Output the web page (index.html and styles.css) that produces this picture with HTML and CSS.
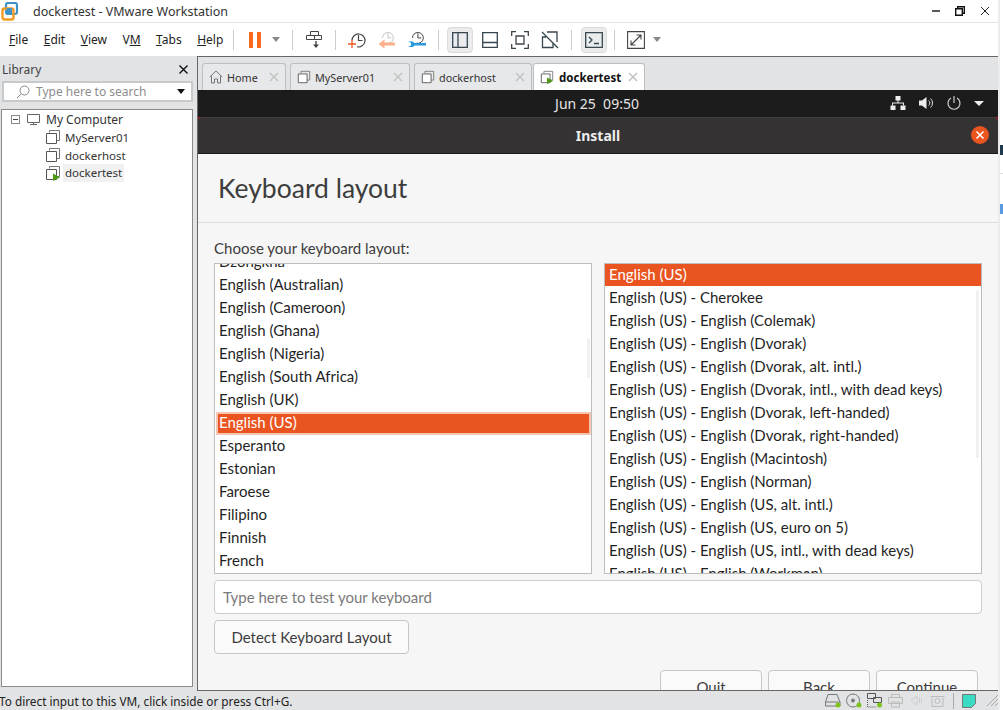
FILE: index.html
```html
<!DOCTYPE html>
<html lang="en">

<head>
    <meta charset="utf-8">
    <title>dockertest - VMware Workstation</title>
    <link rel="stylesheet" href="styles.css">
</head>

<body>
    <svg class="defs" width="0" height="0">
        <symbol id="vm" viewBox="0 0 16 16">
            <path d="M4.5 3.5V1.5h10v10h-3" fill="none" stroke="#777"/>
            <path d="M1.5 4.5h10v10h-10z" fill="#fff" stroke="#555"/>
        </symbol>
        <symbol id="clock" viewBox="0 0 18 18">
            <path d="M3 9.5a6.5 6.5 0 1 1 5 6.3" fill="none" stroke="currentColor" stroke-width="1.2"/>
            <path d="M9.5 4v5.5h4" fill="none" stroke="currentColor" stroke-width="1.2"/>
        </symbol>
        <symbol id="tab-x" viewBox="0 0 10 10">
            <path d="M1 1l8 8M9 1l-8 8" stroke="#c4c4c4" stroke-width="1.6"/>
        </symbol>
    </svg>

    <div class="window">
        <header class="titlebar">
            <svg class="logo" width="17" height="19" viewBox="0 0 17 19">
                <rect x="5" y="1" width="11" height="11" rx="2" fill="none" stroke="#3d93c8" stroke-width="2.2"/>
                <rect x="1.5" y="6.5" width="11" height="11" rx="2" fill="none" stroke="#f29a25" stroke-width="2.4"/>
                <rect x="6" y="6" width="5" height="5" fill="#3d93c8"/>
            </svg>
            <span class="app-title">dockertest - VMware Workstation</span>
            <div class="win-buttons">
                <svg width="10" height="10" viewBox="0 0 10 10"><path d="M2 5h8" stroke="#111" stroke-width="1.4"/></svg>
                <svg width="10" height="10" viewBox="0 0 10 10"><path d="M.7 2.7h6.6v6.6H.7zM2.7 2V.7h6.6v6.6H8" fill="none" stroke="#111" stroke-width="1.4"/></svg>
                <svg width="10" height="10" viewBox="0 0 10 10"><path d="M1 1l8 8M9 1L1 9" stroke="#222" stroke-width="1"/></svg>
            </div>
        </header>

        <nav class="menubar">
            <div class="menu">
                <span><u>F</u>ile</span>
                <span><u>E</u>dit</span>
                <span><u>V</u>iew</span>
                <span>V<u>M</u></span>
                <span><u>T</u>abs</span>
                <span><u>H</u>elp</span>
            </div>
            <i class="sep first"></i>
            <div class="pause"><b></b><b></b></div>
            <i class="caret"></i>
            <i class="sep"></i>
            <div class="tool">
                <svg width="20" height="20" viewBox="0 0 20 20" fill="none" stroke="#444">
                    <path d="M6.5 1.5h8v4h-8zM2.5 5.5h8v4h-8zM10.5 5.5h7v4h-7z"/>
                    <path d="M12 11v4" stroke-width="1.4"/>
                    <path d="M9 14.5h6L12 18z" fill="#444" stroke="none"/>
                </svg>
            </div>
            <i class="sep"></i>
            <div class="tool">
                <svg class="c-dark" width="20" height="20" viewBox="0 0 20 20">
                    <use href="#clock" x="2" y="1" width="18" height="18"/>
                    <path d="M1 14h8M5 10v8" stroke="#ee5a1f" stroke-width="1.3"/>
                </svg>
            </div>
            <div class="tool">
                <svg class="c-faint" width="20" height="20" viewBox="0 0 20 20">
                    <use href="#clock" x="3" y="0" width="15" height="15"/>
                    <path d="M7 12.5h11v3H7z" fill="#ffb08a"/>
                    <path d="M7.5 9.5v9L1.5 14z" fill="#ffb08a"/>
                </svg>
            </div>
            <div class="tool">
                <svg class="c-dark" width="20" height="20" viewBox="0 0 20 20">
                    <use href="#clock" x="3" y="0" width="15" height="15"/>
                    <path d="M1 11.5h5l1.5 1.5H19v2.5H7.5L6 17H1l3-1.5v-2.5z" fill="#2a9ae0"/>
                </svg>
            </div>
            <i class="sep"></i>
            <div class="tool active">
                <svg width="16" height="16" viewBox="0 0 16 16" fill="none" stroke="#37474f" stroke-width="1.3"><path d="M.7.7h14.6v14.6H.7zM6 .7v14.6"/></svg>
            </div>
            <div class="tool">
                <svg width="16" height="16" viewBox="0 0 16 16" fill="none" stroke="#37474f" stroke-width="1.3"><path d="M.7.7h14.6v14.6H.7zM.7 10.5h14.6"/></svg>
            </div>
            <div class="tool">
                <svg width="18" height="18" viewBox="0 0 18 18" fill="none" stroke="#37474f" stroke-width="1.3"><path d="M5 .7H.7V5M13 .7h4.300V5M5 17.300H.7V13M13 17.300h4.300V13M5 5h8v8H5z"/></svg>
            </div>
            <div class="tool">
                <svg width="18" height="18" viewBox="0 0 18 18" fill="none" stroke="#37474f" stroke-width="1.3"><path d="M6 1h10v10M12 12v4.500H1.500V6H5M1 1l16 16"/></svg>
            </div>
            <i class="sep"></i>
            <div class="tool active console">
                <svg width="18" height="16" viewBox="0 0 18 16" fill="none" stroke="#37474f" stroke-width="1.3"><path d="M.7.7h16.600v14.600H.7zM4 5l3 3-3 3M9 11.500h5"/></svg>
            </div>
            <i class="sep"></i>
            <div class="tool">
                <svg width="18" height="18" viewBox="0 0 18 18" fill="none" stroke="#444" stroke-width="1.1"><path d="M.6.6h16.800v16.800H.6zM4 14l10-10M9.500 4H14v4.500M4 9.500V14h4.500"/></svg>
            </div>
            <i class="caret last"></i>
        </nav>

        <div class="main">
            <aside class="library">
                <div class="lib-head">
                    <span>Library</span>
                    <svg width="9" height="9" viewBox="0 0 9 9"><path d="M.5.5l8 8M8.500.5l-8 8" stroke="#111" stroke-width="1.4"/></svg>
                </div>
                <div class="lib-search">
                    <svg width="14" height="14" viewBox="0 0 14 14" fill="none" stroke="#888"><circle cx="8.500" cy="5.500" r="4.500"/><path d="M5 9l-4 4"/></svg>
                    <span>Type here to search</span>
                    <i class="caret black"></i>
                </div>
                <div class="tree">
                    <div class="tree-row root">
                        <i class="collapse"></i>
                        <svg width="15" height="13" viewBox="0 0 15 13" fill="none" stroke="#666"><path d="M1.500 1.500h12v8h-12zM4 11.500h7M7.500 9.500v2"/></svg>
                        <span>My Computer</span>
                    </div>
                    <div class="tree-row">
                        <svg width="16" height="16"><use href="#vm"/></svg>
                        <span>MyServer01</span>
                    </div>
                    <div class="tree-row">
                        <svg width="16" height="16"><use href="#vm"/></svg>
                        <span>dockerhost</span>
                    </div>
                    <div class="tree-row">
                        <svg width="16" height="16" viewBox="0 0 16 16">
                            <use href="#vm"/>
                            <path d="M8 8.500l7 4-7 3.500z" fill="#4c9a16"/>
                        </svg>
                        <span class="current">dockertest</span>
                    </div>
                </div>
            </aside>

            <section class="workspace">
                <div class="tabs">
                    <div class="tab home">
                        <svg width="14" height="14" viewBox="0 0 14 14" fill="none" stroke="#777"><path d="M.7 7L7 1l6.300 6M2.500 6v7h3V9h3v4h3V6"/></svg>
                        <span>Home</span>
                        <svg class="tab-close" width="10" height="10"><use href="#tab-x"/></svg>
                    </div>
                    <div class="tab server">
                        <svg width="14" height="14" viewBox="0 0 16 16"><use href="#vm"/></svg>
                        <span>MyServer01</span>
                        <svg class="tab-close" width="10" height="10"><use href="#tab-x"/></svg>
                    </div>
                    <div class="tab host">
                        <svg width="14" height="14" viewBox="0 0 16 16"><use href="#vm"/></svg>
                        <span>dockerhost</span>
                        <svg class="tab-close" width="10" height="10"><use href="#tab-x"/></svg>
                    </div>
                    <div class="tab on">
                        <svg width="14" height="14" viewBox="0 0 16 16">
                            <use href="#vm"/>
                            <path d="M8 8.500l7 4-7 3.500z" fill="#4c9a16"/>
                        </svg>
                        <span>dockertest</span>
                        <svg class="tab-close" width="10" height="10"><use href="#tab-x"/></svg>
                    </div>
                </div>

                <div class="guest">
                    <div class="gnome-bar">
                        <span class="clock">Jun 25&nbsp;&nbsp;09:50</span>
                        <div class="tray">
                            <svg width="16" height="14" viewBox="0 0 16 14" fill="#eee">
                                <rect x="5.500" y="0" width="5" height="4.500"/>
                                <rect x="0.500" y="9.500" width="5" height="4.500"/>
                                <rect x="10.500" y="9.500" width="5" height="4.500"/>
                                <path d="M7.500 4h1v2.500h5.500v3h-1V7.500H3v2H2v-3h5.500z"/>
                            </svg>
                            <svg width="15" height="14" viewBox="0 0 15 14">
                                <path d="M0 4.500h3L7.500 1v12L3 9.500H0z" fill="#eee"/>
                                <path d="M9.500 4.500a3 3 0 0 1 0 5M11.500 2.500a6 6 0 0 1 0 9" fill="none" stroke="#ddd"/>
                            </svg>
                            <svg width="14" height="14" viewBox="0 0 14 14" fill="none" stroke="#ddd" stroke-width="1.100"><path d="M4 2a6 6 0 1 0 6 0M7 0v7"/></svg>
                            <i class="caret white"></i>
                        </div>
                    </div>
                    <div class="install-bar">
                        <span>Install</span>
                        <svg class="install-close" width="18" height="18" viewBox="0 0 18 18">
                            <circle cx="9" cy="9" r="9" fill="#e95420"/>
                            <path d="M5.500 5.500l7 7M12.500 5.500l-7 7" stroke="#fff" stroke-width="1.500"/>
                        </svg>
                    </div>
                    <div class="installer">
                        <h1>Keyboard layout</h1>
                        <div class="pane">
                            <label>Choose your keyboard layout:</label>
                            <div class="lists">
                                <div class="list left">
                                    <ul>
                                        <li>Dzongkha</li>
                                        <li>English (Australian)</li>
                                        <li>English (Cameroon)</li>
                                        <li>English (Ghana)</li>
                                        <li>English (Nigeria)</li>
                                        <li>English (South Africa)</li>
                                        <li>English (UK)</li>
                                        <li class="sel">English (US)</li>
                                        <li>Esperanto</li>
                                        <li>Estonian</li>
                                        <li>Faroese</li>
                                        <li>Filipino</li>
                                        <li>Finnish</li>
                                        <li>French</li>
                                    </ul>
                                    <i class="scroll"></i>
                                </div>
                                <div class="list right">
                                    <ul>
                                        <li class="sel">English (US)</li>
                                        <li>English (US) - Cherokee</li>
                                        <li>English (US) - English (Colemak)</li>
                                        <li>English (US) - English (Dvorak)</li>
                                        <li>English (US) - English (Dvorak, alt. intl.)</li>
                                        <li>English (US) - English (Dvorak, intl., with dead keys)</li>
                                        <li>English (US) - English (Dvorak, left-handed)</li>
                                        <li>English (US) - English (Dvorak, right-handed)</li>
                                        <li>English (US) - English (Macintosh)</li>
                                        <li>English (US) - English (Norman)</li>
                                        <li>English (US) - English (US, alt. intl.)</li>
                                        <li>English (US) - English (US, euro on 5)</li>
                                        <li>English (US) - English (US, intl., with dead keys)</li>
                                        <li>English (US) - English (Workman)</li>
                                    </ul>
                                    <i class="scroll"></i>
                                </div>
                            </div>
                            <div class="test-input">Type here to test your keyboard</div>
                            <button class="btn detect">Detect Keyboard Layout</button>
                            <div class="actions">
                                <button class="btn">Quit</button>
                                <button class="btn">Back</button>
                                <button class="btn">Continue</button>
                            </div>
                        </div>
                    </div>
                </div>
            </section>
        </div>

        <footer class="statusbar">
            <span class="hint">To direct input to this VM, click inside or press Ctrl+G.</span>
            <div class="devices">
                <svg width="16" height="15" viewBox="0 0 16 15" fill="none" stroke="#777"><path d="M3 1.500h9l3 7.500v4H.5V9zM.5 9h14"/><circle cx="13" cy="12" r="2.500" fill="#7cc41a" stroke="none"/></svg>
                <svg width="16" height="15" viewBox="0 0 16 15" fill="none" stroke="#777"><circle cx="7" cy="7.500" r="6.500"/><circle cx="7" cy="7.500" r="1.500" fill="#777"/><circle cx="13" cy="12" r="2.500" fill="#7cc41a" stroke="none"/></svg>
                <svg width="16" height="15" viewBox="0 0 16 15" fill="none" stroke="#555"><path d="M.5.500h8v5h-8zM6.500 4.500h8v5h-8z"/><path d="M.5 7v7h8" stroke-dasharray="1 1"/><circle cx="12.500" cy="12" r="2.500" fill="#7cc41a" stroke="none"/></svg>
                <svg width="16" height="15" viewBox="0 0 16 15" fill="none" stroke="#bbb"><path d="M3.500 4.500v-3h8v3M.5 4.500h14v6h-14zM3.500 9h8v5h-8z"/></svg>
                <svg width="16" height="15" viewBox="0 0 16 15" fill="none" stroke="#ccc"><path d="M2 7.500L8 3v9zM10.500 5v5M12.500 5v5"/></svg>
                <svg width="16" height="15" viewBox="0 0 16 15" fill="none" stroke="#bbb"><path d="M.5 3.500h14M2 13.500h11M2 13.500V5M13 13.500V5"/><circle cx="7.500" cy="8" r="2.500"/></svg>
                <i class="status-sep"></i>
                <svg class="note" width="14" height="14" viewBox="0 0 14 14"><path d="M.5.5h13v9l-4 4h-9z" fill="#3bdcc4" stroke="#777"/></svg>
                <svg class="grip" width="11" height="11" viewBox="0 0 11 11" stroke="#aaa"><path d="M11 0L0 11M11 4L4 11M11 8l-3 3"/></svg>
            </div>
        </footer>
    </div>

    <div class="behind">
        <i class="bit dark"></i>
        <i class="rule"></i>
        <i class="bit blue"></i>
    </div>
</body>
</html>
```

FILE: styles.css
```css
* {
    box-sizing: border-box;
}

html,
body {
    margin: 0;
    height: 100%;
    overflow: hidden;
}

body {
    display: flex;
    background: #fff;
    font-family: "Noto Sans", sans-serif;
    font-size: 12px;
    color: #222;
}

.defs {
    position: absolute;
}

.window {
    width: 998px;
    height: 710px;
    display: flex;
    flex-direction: column;
    background: #fff;
}

.behind {
    flex: 1;
    border-left: 2px solid #ececec;
    display: flex;
    flex-direction: column;
}

.behind .bit {
    width: 3px;
    height: 10px;
}

.behind .dark {
    margin-top: 145px;
    background: #1f3a4c;
}

.behind .rule {
    margin-top: 18px;
    height: 1px;
    background: #ddd;
}

.behind .blue {
    margin-top: 30px;
    background: #5a9be0;
}

/* title + menu */
.titlebar {
    height: 23px;
    display: flex;
    align-items: center;
    padding-left: 1px;
    border-bottom: 1px solid #e2e2e2;
}

.app-title {
    margin-left: 15px;
    font-size: 12.500px;
    color: #333;
}

.win-buttons {
    margin-left: auto;
    display: flex;
    gap: 15px;
    padding-right: 8px;
}

.menubar {
    height: 33px;
    display: flex;
    align-items: center;
    padding-left: 9px;
}

.menu {
    width: 212px;
    display: flex;
    gap: 15.500px;
    color: #222;
    white-space: nowrap;
}

.sep {
    width: 1px;
    height: 20px;
    background: #ccc;
    margin: 0 6px;
}

.sep.first {
    margin-left: 12px;
}

.pause {
    display: flex;
    gap: 4px;
    margin-left: 9px;
}

.pause b {
    width: 4px;
    height: 16px;
    background: #ff6a1c;
}

.caret {
    width: 0;
    height: 0;
    border: 4px solid transparent;
    border-top: 5px solid #888;
    border-bottom: 0;
    margin: 0 6px 0 11px;
}

.caret.last {
    margin-left: 2px;
}

.caret.black {
    border-top-color: #111;
    border-width: 5px 4px 0;
    margin: 0;
    margin-left: auto;
}

.caret.white {
    border-top-color: #eee;
    border-width: 5px 5px 0;
    margin: 0;
}

.tool {
    width: 30px;
    height: 26px;
    display: flex;
    align-items: center;
    justify-content: center;
    border-radius: 4px;
}

.tool.active {
    width: 26px;
    margin: 0 2px;
    background: #e9ebed;
    border: 1px solid #dcdcdc;
}

.tool.console {
    margin: 0 1px 0 3px;
}

.c-dark {
    color: #444;
}

.c-faint {
    color: #c4c4c4;
}

/* main area */
.main {
    height: 635px;
    display: flex;
}

.library {
    width: 197px;
    background: #e1e3e5;
    padding-left: 1px;
    display: flex;
    flex-direction: column;
}

.lib-head {
    height: 25px;
    flex: none;
    display: flex;
    align-items: center;
    justify-content: space-between;
    padding: 1px 9px 0 1px;
    color: #444;
}

.lib-search {
    height: 21px;
    width: 191px;
    margin-left: 1px;
    display: flex;
    align-items: center;
    padding: 0 6px 0 12px;
    gap: 6px;
    background: #fff;
    border: 2px solid #c8c9ca;
    color: #8d8d8d;
}

.tree {
    width: 192px;
    height: 578px;
    margin-top: 7px;
    background: #fff;
    border: 1px solid #8a8a8a;
}

.tree-row {
    height: 18px;
    display: flex;
    align-items: center;
    gap: 4px;
    padding-left: 43px;
    color: #333;
    font-size: 11.500px;
}

.tree-row.root {
    padding-left: 9px;
    gap: 5px;
    font-size: 12px;
}

.collapse {
    width: 9px;
    height: 9px;
    margin-right: 1px;
    border: 1px solid #8a8a8a;
    background: linear-gradient(#444, #444) center / 5px 1px no-repeat;
}

.current {
    background: #f1f1f1;
    padding: 0 2px;
    line-height: 18px;
    margin-left: -2px;
}

.workspace {
    width: 801px;
    display: flex;
    flex-direction: column;
    border-top: 1px solid #666;
    border-left: 1px solid #666;
    background: #e1e3e5;
}

.tabs {
    height: 33px;
    flex: none;
    display: flex;
    align-items: flex-end;
    padding-left: 4px;
    gap: 4px;
}

.tab {
    height: 27px;
    display: flex;
    align-items: center;
    gap: 4px;
    padding: 0 6px;
    background: #e7e8ea;
    border: 1px solid #bdbec0;
    border-bottom: 0;
    border-radius: 3px 3px 0 0;
    color: #333;
    font-size: 10.800px;
}

.tab.home {
    width: 84px;
}

.tab.server {
    width: 120px;
}

.tab.host {
    width: 118px;
}

.tab.on {
    width: 112px;
    margin-left: -3px;
    gap: 5px;
    background: #fff;
    font-size: 11.500px;
    font-weight: 700;
    color: #111;
}

.tab-close {
    margin-left: auto;
}

/* guest screen */
.guest {
    height: 601px;
    display: flex;
    flex-direction: column;
    overflow: hidden;
    border-bottom: 1px solid #666;
    background: #f6f6f6;
}

.gnome-bar {
    height: 27px;
    flex: none;
    display: flex;
    align-items: center;
    justify-content: center;
    position: relative;
    padding: 0 2px 1px 0;
    background: #1c1c1c;
    color: #e6e6e6;
    font-size: 14px;
}

.tray {
    position: absolute;
    right: 14px;
    top: 6px;
    display: flex;
    align-items: center;
    gap: 13px;
}

.install-bar {
    height: 37px;
    flex: none;
    display: flex;
    align-items: center;
    justify-content: center;
    position: relative;
    background: #343232;
    border-top: 1px solid #3f3d3d;
    border-bottom: 1px solid #1a1a1a;
    color: #eee;
    font-weight: 700;
    font-size: 14px;
}

.install-bar::before,
.install-bar::after {
    content: "";
    position: absolute;
    top: -1px;
    border-top: 3px solid #8e1f2a;
}

.install-bar::before {
    left: 0;
    border-right: 3px solid transparent;
}

.install-bar::after {
    right: 0;
    border-left: 3px solid transparent;
}

.install-close {
    position: absolute;
    right: 9px;
    top: 8px;
}

.installer {
    flex: 1;
    font-family: "Lato", sans-serif;
    color: #3d3d3d;
}

.installer h1 {
    margin: 0;
    height: 69px;
    padding: 15px 0 0 20px;
    font-size: 26.500px;
    font-weight: 400;
    line-height: 38px;
    border-bottom: 1px solid #dedede;
}

.pane {
    padding: 16px 16px 0;
    font-size: 15px;
}

.pane label {
    display: block;
    height: 24px;
    line-height: 18px;
}

.lists {
    display: flex;
    gap: 12px;
}

.list {
    width: 378px;
    height: 311px;
    padding: 1px 0 1px 1px;
    overflow: hidden;
    position: relative;
    background: #fff;
    border: 1px solid #bdbdbd;
    color: #1f1f1f;
}

.list.right {
    padding: 0;
}

.list ul {
    margin: 0;
    padding: 0;
    list-style: none;
}

.list.left ul {
    margin-top: -14px;
}

.list li {
    height: 23px;
    line-height: 21px;
    padding-left: 3px;
    white-space: nowrap;
}

.list.right li {
    line-height: 22px;
    padding-left: 4px;
}

.list li.sel {
    position: relative;
    z-index: 1;
    background: #e95420;
    color: #fff;
    box-shadow: inset 0 0 0 2px #f7c6b1;
}

.list.right li.sel {
    height: 22px;
    line-height: 20px;
    box-shadow: none;
}

.scroll {
    position: absolute;
    width: 3px;
    border-radius: 2px;
    background: #f0f0f0;
}

.left .scroll {
    right: 1px;
    top: 74px;
    height: 40px;
}

.right .scroll {
    right: 2px;
    top: 26px;
    height: 168px;
}

.test-input {
    height: 34px;
    margin-top: 6px;
    width: 768px;
    padding-left: 8px;
    line-height: 32px;
    background: #fff;
    border: 1px solid #cdcdcd;
    border-radius: 4px;
    color: #7a7a7a;
}

.btn {
    height: 34px;
    background: #fafafa;
    border: 1px solid #c6c6c6;
    border-radius: 4px;
    font: inherit;
    color: #3d3d3d;
    padding: 0;
}

.detect {
    width: 195px;
    display: block;
    margin-top: 6px;
}

.actions {
    display: flex;
    justify-content: flex-end;
    gap: 6px;
    margin-top: 16px;
    width: 764px;
}

.actions .btn {
    width: 102px;
}

/* status bar */
.statusbar {
    height: 19px;
    display: flex;
    align-items: center;
    background: #e1e3e5;
    color: #222;
    font-size: 11.800px;
}

.hint {
    margin-left: -1px;
}

.devices {
    margin-left: auto;
    display: flex;
    align-items: center;
    gap: 5px;
}

.status-sep {
    width: 1px;
    height: 16px;
    margin: 0 3px 0 2px;
    background: #aaa;
}

.note {
    margin-right: 6px;
}
```
